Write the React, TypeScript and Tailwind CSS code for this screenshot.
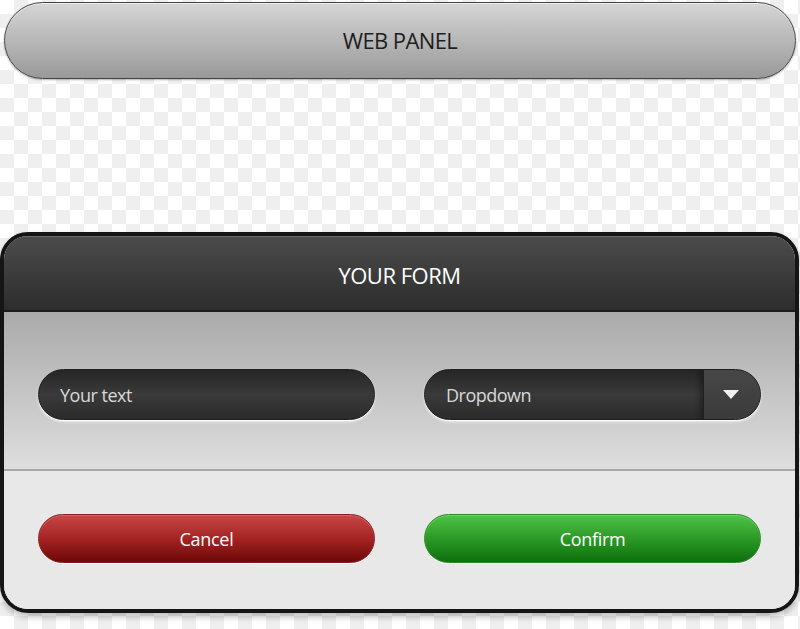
export default function App() {
  return (
    <div
      className="w-[800px] h-[629px] overflow-hidden bg-[repeating-conic-gradient(#efefef_0%_25%,#ffffff_0%_50%)] bg-size-[28px_28px] pt-[2px] font-['Open_Sans','Noto_Sans',sans-serif]"
    >
      {/* top pill */}
      <div className="mx-[4px] h-[77px] rounded-full border-[1.5px] border-[#444] bg-gradient-to-b from-[#d6d6d6] to-[#999999] shadow-[inset_0_1px_0_#eeeeee,0_1px_2px_rgba(0,0,0,0.3)] flex items-center justify-center">
        <span className="text-[22px] text-[#1e1e1e] tracking-[-0.6px]">WEB PANEL</span>
      </div>

      {/* form panel */}
      <div className="mt-[153px] ml-0 w-[799px] h-[381px] rounded-[28px] border-[4px] border-[#151515] overflow-hidden flex flex-col shadow-[0_4px_6px_rgba(0,0,0,0.25)]">
        <div className="h-[76px] shrink-0 bg-gradient-to-b from-[#4c4c4c] to-[#2d2d2d] border-b-[2px] border-[#1c1c1c] shadow-[inset_0_1px_0_#6a6a6a] flex items-center justify-center pt-[4px]">
          <span className="text-[22px] text-white tracking-[-0.5px]">YOUR FORM</span>
        </div>

        <div className="flex-1 flex flex-col bg-[#e8e8e8]">
          <div className="h-[157px] shrink-0 bg-gradient-to-b from-[#aaaaaa] to-[#dedede] px-[34px] pt-[57px]">
            <div className="grid grid-cols-2 gap-[49px]">
              <div className="h-[51px] rounded-full border border-[#1e1e1e] bg-gradient-to-b from-[#262626] via-[#3a3a3a] to-[#2b2b2b] shadow-[0_1px_0_#ffffff,0_2px_3px_rgba(255,255,255,0.6)] flex items-center pl-[21px] pt-[2px]">
                <span className="text-[18px] text-[#d8d8d8] tracking-[-0.5px]">Your text</span>
              </div>
              <div className="h-[51px] rounded-full border border-[#1e1e1e] bg-gradient-to-b from-[#262626] via-[#3a3a3a] to-[#2b2b2b] shadow-[0_1px_0_#ffffff,0_2px_3px_rgba(255,255,255,0.6)] flex items-stretch overflow-hidden">
                <div className="flex-1 flex items-center pl-[21px] pt-[2px]">
                  <span className="text-[18px] text-[#d8d8d8] tracking-[-0.5px]">Dropdown</span>
                </div>
                <div className="w-[57px] border-l border-[#202020] bg-gradient-to-b from-[#474747] to-[#3b3b3b] shadow-[-3px_0_6px_rgba(0,0,0,0.35)] flex items-center justify-center pr-[3px] pt-[1px]">
                  <svg width="16" height="10" viewBox="0 0 16 10">
                    <path d="M0 0 H16 L8 9 Z" fill="#f2f2f2" />
                  </svg>
                </div>
              </div>
            </div>
          </div>
          <div className="h-[2px] bg-[#a8a8a8] shrink-0" />
          <div className="px-[34px] pt-[43px]">
            <div className="grid grid-cols-2 gap-[49px]">
              <div className="h-[49px] rounded-full border border-[#8a1c1c] bg-gradient-to-b from-[#c84646] via-[#a52323] to-[#6e0707] shadow-[inset_0_1px_0_#d86565,0_1px_0_#ffffff] flex items-center justify-center pt-[2px]">
                <span className="text-[18px] text-white tracking-[-0.3px]">Cancel</span>
              </div>
              <div className="h-[49px] rounded-full border border-[#2b8a26] bg-gradient-to-b from-[#4fc246] via-[#2b9a26] to-[#0c700c] shadow-[inset_0_1px_0_#6ad45f,0_1px_0_#ffffff] flex items-center justify-center pt-[2px]">
                <span className="text-[18px] text-white tracking-[-0.3px]">Confirm</span>
              </div>
            </div>
          </div>
        </div>
      </div>
    </div>
  )
}
